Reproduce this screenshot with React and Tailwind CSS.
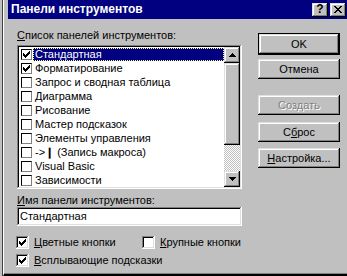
import React from 'react';

const raised =
  'shadow-[inset_-1px_-1px_#000,inset_1px_1px_#dfdfdf,inset_-2px_-2px_#808080,inset_2px_2px_#fff]';
const sunken =
  'shadow-[inset_-1px_-1px_#fff,inset_1px_1px_#808080,inset_-2px_-2px_#dfdfdf,inset_2px_2px_#000]';

const CHECK = [[6, 0, 1], [5, 1, 2], [0, 2, 1], [4, 2, 3], [0, 3, 2], [3, 3, 3], [0, 4, 5], [1, 5, 3], [2, 6, 1]];
const CROSS = [[0, 0, 2], [6, 0, 2], [1, 1, 2], [5, 1, 2], [2, 2, 4], [3, 3, 2], [2, 4, 4], [1, 5, 2], [5, 5, 2], [0, 6, 2], [6, 6, 2]];

const Pixels = ({ map, w, h }) => (
  <svg width={w} height={h} viewBox={`0 0 ${w} ${h}`} shapeRendering="crispEdges">
    {map.map(([x, y, len], i) => (
      <rect key={i} x={x} y={y} width={len} height="1" fill="#000" />
    ))}
  </svg>
);

const Arrow = ({ down }) => {
  const rows = down
    ? [[0, 0, 7], [1, 1, 5], [2, 2, 3], [3, 3, 1]]
    : [[3, 0, 1], [2, 1, 3], [1, 2, 5], [0, 3, 7]];
  return <Pixels map={rows} w={7} h={4} />;
};

const items = [
  ['Стандартная', true],
  ['Форматирование', true],
  ['Запрос и сводная таблица', false],
  ['Диаграмма', false],
  ['Рисование', false],
  ['Мастер подсказок', false],
  ['Элементы управления', false],
  ['->❙ (Запись макроса)', false],
  ['Visual Basic', false],
  ['Зависимости', false],
];

const ListRow = ({ label, checked, selected }) => (
  <div className="h-[14px] flex items-center">
    <div className="ml-[2px] w-[11px] h-[11px] shrink-0 bg-white border border-t-black border-l-black border-r-[#808080] border-b-[#808080] flex items-center justify-center">
      {checked && <Pixels map={CHECK} w={7} h={7} />}
    </div>
    {selected ? (
      <div className="ml-[1px] flex-1 h-[13px] bg-[#000080] text-white border border-dotted border-[#ffff80] pl-[1px] flex items-center">
        {label}
      </div>
    ) : (
      <div className="ml-[3px] h-[13px] flex items-center">{label}</div>
    )}
  </div>
);

const Button = ({ children, isDefault, disabled, className = '' }) => (
  <div
    className={`w-[82px] flex items-center justify-center ${raised} ${
      isDefault ? 'h-[22px] border border-black' : 'h-[20px]'
    } ${disabled ? 'text-[#808080] [text-shadow:1px_1px_0_#fff]' : ''} ${className}`}
  >
    {children}
  </div>
);

const CheckBox = ({ checked, children }) => (
  <div className="flex items-center">
    <div className={`w-[13px] h-[13px] bg-white ${sunken} flex items-center justify-center`}>
      {checked && <Pixels map={CHECK} w={7} h={7} />}
    </div>
    <span className="ml-[5px]">{children}</span>
  </div>
);

export default function App() {
  return (
    <div className="w-[347px] h-[276px] overflow-hidden flex bg-[#c0c0c0] text-[11px] leading-[13px] text-black font-['Liberation_Sans',Arial,sans-serif]">
      <div className="w-[2px] shrink-0" />
      <div className="w-[1px] shrink-0 bg-[#404040]" />
      <div className="flex-1 flex flex-col border-l border-white border-b-2 border-b-black">
        <div className="flex-1 flex flex-col pl-[4px] border-b border-[#808080]">
          {/* title bar */}
          <div className="h-[19px] bg-[#000080] flex items-center pl-[3px] pr-[1px]">
            <span className="text-white font-bold text-[12px]">Панели инструментов</span>
            <div className="ml-auto flex gap-[2px]">
              <div className={`w-[16px] h-[14px] bg-[#c0c0c0] text-black ${raised} flex items-center justify-center font-bold text-[12px] leading-none pb-[1px]`}>
                ?
              </div>
              <div className={`w-[16px] h-[14px] bg-[#c0c0c0] ${raised} flex items-center justify-center pb-[1px]`}>
                <Pixels map={CROSS} w={8} h={7} />
              </div>
            </div>
          </div>

          {/* client */}
          <div className="flex-1 flex pl-[9px]">
            <div className="w-[225px] flex flex-col pt-[10px]">
              <div className="h-[13px]">
                <u>С</u>писок панелей инструментов:
              </div>
              <div className={`mt-[3px] h-[144px] bg-white ${sunken} p-[2px] flex`}>
                <div className="flex-1 flex flex-col">
                  {items.map(([label, checked], i) => (
                    <ListRow key={label} label={label} checked={checked} selected={i === 0} />
                  ))}
                </div>
                <div className="w-[16px] flex flex-col bg-[#c0c0c0]">
                  <div className={`h-[16px] ${raised} flex items-center justify-center`}>
                    <Arrow />
                  </div>
                  <div className={`h-[82px] ${raised}`} />
                  <div className="flex-1 bg-[repeating-conic-gradient(#c0c0c0_0_25%,#fff_0_50%)] bg-[length:2px_2px]" />
                  <div className={`h-[16px] ${raised} flex items-center justify-center`}>
                    <Arrow down />
                  </div>
                </div>
              </div>
              <div className="mt-[5px] h-[13px]">
                <u>И</u>мя панели инструментов:
              </div>
              <div className={`h-[19px] bg-white ${sunken} flex items-center pl-[3px]`}>Стандартная</div>
              <div className="mt-[10px] flex -ml-[1px]">
                <div className="w-[126px]">
                  <CheckBox checked>
                    <u>Ц</u>ветные кнопки
                  </CheckBox>
                </div>
                <CheckBox>
                  <u>К</u>рупные кнопки
                </CheckBox>
              </div>
              <div className="mt-[5px] -ml-[1px]">
                <CheckBox checked>
                  <u>В</u>сплывающие подсказки
                </CheckBox>
              </div>
            </div>

            <div className="ml-[16px] flex flex-col pt-[14px]">
              <Button isDefault>OK</Button>
              <Button className="mt-[4px]">Отмена</Button>
              <Button className="mt-[16px]" disabled>
                Создать
              </Button>
              <Button className="mt-[7px]">
                <span>
                  С<u>б</u>рос
                </span>
              </Button>
              <Button className="mt-[6px]">
                <span>
                  <u>Н</u>астройка...
                </span>
              </Button>
            </div>
          </div>
        </div>
      </div>
    </div>
  );
}
